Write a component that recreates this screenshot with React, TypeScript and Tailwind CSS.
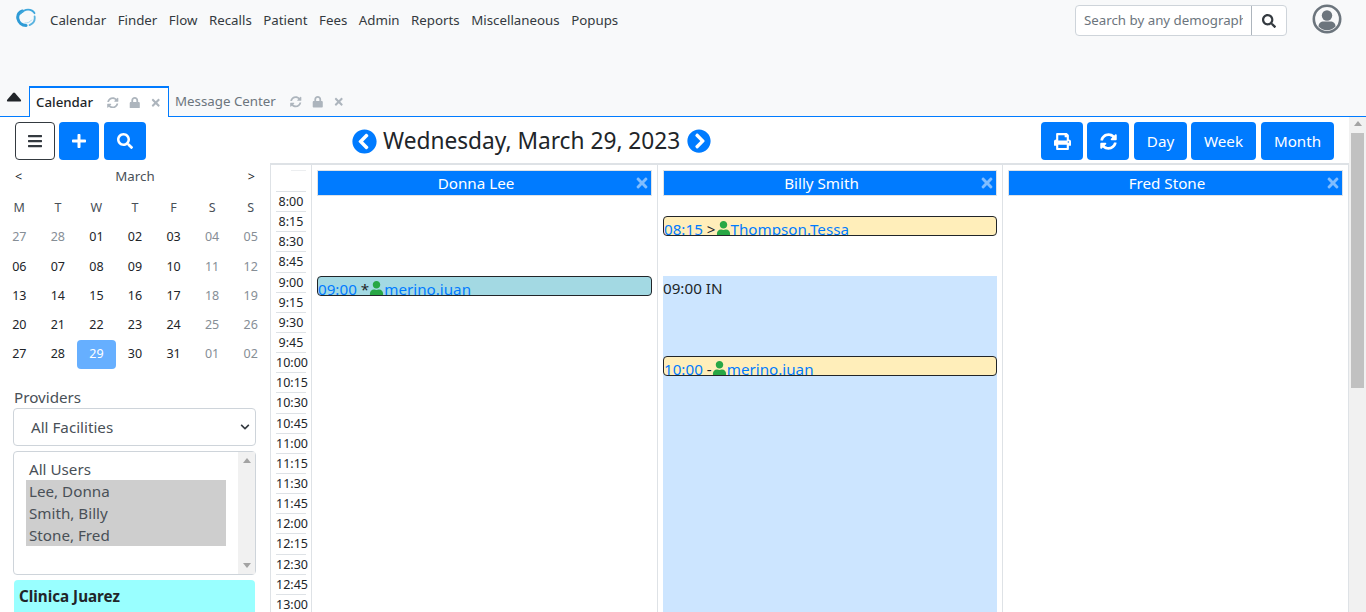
import React from 'react';
import {
  FaBars,
  FaChevronCircleLeft,
  FaChevronCircleRight,
  FaChevronDown,
  FaLock,
  FaPlus,
  FaPrint,
  FaSearch,
  FaSyncAlt,
  FaTimes,
  FaUser,
} from 'react-icons/fa';

const menuItems = ['Calendar', 'Finder', 'Flow', 'Recalls', 'Patient', 'Fees', 'Admin', 'Reports', 'Miscellaneous', 'Popups'];
const times = [
  '8:00', '8:15', '8:30', '8:45', '9:00', '9:15', '9:30', '9:45', '10:00', '10:15', '10:30',
  '10:45', '11:00', '11:15', '11:30', '11:45', '12:00', '12:15', '12:30', '12:45', '13:00',
];
const weekDays = ['M', 'T', 'W', 'T', 'F', 'S', 'S'];
const monthDays = [
  ['27', '28', '01', '02', '03', '04', '05'],
  ['06', '07', '08', '09', '10', '11', '12'],
  ['13', '14', '15', '16', '17', '18', '19'],
  ['20', '21', '22', '23', '24', '25', '26'],
  ['27', '28', '29', '30', '31', '01', '02'],
];

function isMuted(row: number, col: number) {
  if (row === 0 && col < 2) return true;
  return col > 4;
}

function TabIcons() {
  return (
    <span className="flex items-center text-[11.5px] text-[#adb5bd]">
      <FaSyncAlt />
      <FaLock className="ml-[10px]" />
      <FaTimes className="ml-[10px]" />
    </span>
  );
}

function Logo() {
  return (
    <svg viewBox="0 0 20 20" className="h-[20px] w-[20px]">
      <path d="M6.5 3C3 4.4 1.2 7.4 1.9 10.8c.8 3.8 4 6.6 8.2 6.7" fill="none" stroke="#2e9bd6" strokeWidth="3" strokeLinecap="round" />
      <path d="M4.5 5.5C7 1.6 12.5 0.6 16 2.6c1.2.7 2 1.6 2.5 2.6" fill="none" stroke="#3fa7dc" strokeWidth="1.8" strokeLinecap="round" />
      <path d="M18.6 8.5c.6 3.6-1.4 7-5 8.6" fill="none" stroke="#5bb4e0" strokeWidth="1.8" strokeLinecap="round" />
      <path d="M9 15c2.6.2 5-.9 6.6-3" fill="none" stroke="#a9d8f0" strokeWidth="1" strokeLinecap="round" />
    </svg>
  );
}

function ProfileIcon() {
  return (
    <svg viewBox="0 0 30 30" className="h-[30px] w-[30px]">
      <circle cx="15" cy="15" r="13.2" fill="none" stroke="#6c757d" strokeWidth="2.6" />
      <circle cx="15" cy="11.5" r="5.2" fill="#6c757d" />
      <path d="M6.5 22.5c0-3.4 2.4-5 5-5h7c2.6 0 5 1.6 5 5-2.2 2.3-5.2 3.7-8.5 3.7s-6.300-1.400-8.500-3.700z" fill="#6c757d" />
    </svg>
  );
}

function Navbar() {
  return (
    <div className="flex h-[86px] items-start bg-[#f8f9fa]">
      <div className="ml-[16px] mt-[8px]">
        <Logo />
      </div>
      <div className="ml-[14px] mt-[10px] flex gap-[11.5px] text-[13.3px] leading-[21px] text-[#343a40]">
        {menuItems.map((item) => (
          <span key={item}>{item}</span>
        ))}
      </div>
      <div className="ml-auto mt-[5px] flex h-[31px] w-[212px] rounded-[4px] border border-[#ced4da] bg-white text-[13.3px] text-[#6c757d]">
        <div className="flex-1 whitespace-nowrap pl-[8px] leading-[29px]">
          <div className="w-[159px] overflow-hidden">Search by any demographics</div>
        </div>
        <div className="flex w-[35px] items-center justify-center border-l border-[#adb5bd] text-[14px] text-[#343a40]">
          <FaSearch />
        </div>
      </div>
      <div className="ml-[25px] mr-[24px] mt-[4px]">
        <ProfileIcon />
      </div>
    </div>
  );
}

function TabBar() {
  return (
    <div className="flex h-[31px] items-end border-b border-[#007bff] bg-[#f8f9fa]">
      <svg viewBox="0 0 16 10" className="mb-[14px] ml-[6px] mr-[7px] h-[10px] w-[16px] fill-[#212529]">
        <path d="M7 1 L1 8 Q0.4 9.5 2 9.5 L14 9.5 Q15.6 9.5 15 8 L9 1 Q8 0 7 1 Z" />
      </svg>
      <div className="-mb-px flex h-[31px] w-[140px] items-center border-x border-t-2 border-[#007bff] border-b-white bg-white pl-[6px] text-[13.3px] font-medium text-[#212529]">
        <span className="w-[71px]">Calendar</span>
        <TabIcons />
      </div>
      <div className="flex h-[30px] items-center pl-[6px] pt-[2px] text-[13.3px] text-[#6c757d]">
        <span className="w-[115px] whitespace-nowrap">Message Center</span>
        <TabIcons />
      </div>
    </div>
  );
}

function MiniCalendar() {
  return (
    <div className="text-[12.5px] text-[#212529]">
      <div className="flex h-[20px] items-center justify-between pl-[15px] pr-[15px]">
        <span>&lt;</span>
        <span className="text-[13.3px] text-[#495057]">March</span>
        <span>&gt;</span>
      </div>
      <div className="mt-[7px] grid grid-cols-7">
        {weekDays.map((day, i) => (
          <div key={i} className="flex h-[29.2px] items-center justify-center text-[#495057]">
            {day}
          </div>
        ))}
        {monthDays.map((row, r) =>
          row.map((day, c) => {
            const selected = r === 4 && c === 2;
            return (
              <div
                key={`${r}-${c}`}
                className={`flex h-[29.2px] items-center justify-center ${
                  selected ? 'rounded-[4px] bg-[#66afff] text-white' : isMuted(r, c) ? 'text-[#868e96]' : 'text-[#212529]'
                }`}
              >
                {day}
              </div>
            );
          })
        )}
      </div>
    </div>
  );
}

function Sidebar() {
  return (
    <div className="h-[495px] w-[270px] shrink-0 overflow-hidden">
      <div className="flex gap-[4px] pl-[15px] pt-[5px]">
        <div className="flex h-[38px] w-[40px] items-center justify-center rounded-[4px] border border-[#343a40] text-[16px] text-[#343a40]">
          <FaBars />
        </div>
        <div className="flex h-[38px] w-[40px] items-center justify-center rounded-[4px] bg-[#007bff] text-[16px] text-white">
          <FaPlus />
        </div>
        <div className="ml-[1px] flex h-[38px] w-[42px] items-center justify-center rounded-[4px] bg-[#007bff] text-[16px] text-white">
          <FaSearch />
        </div>
      </div>
      <div className="mt-[7px]">
        <MiniCalendar />
      </div>
      <div className="ml-[14px] mt-[16px] text-[15.2px] leading-[24px] text-[#495057]">Providers</div>
      <div className="ml-[13px] mt-[-1px] flex h-[38px] w-[243px] items-center justify-between rounded-[4px] border border-[#ced4da] pl-[17px] pr-[5px] text-[15.2px] text-[#495057]">
        <span>All Facilities</span>
        <FaChevronDown className="text-[10px] text-[#343a40]" />
      </div>
      <div className="ml-[13px] mt-[5px] flex h-[124px] w-[243px] rounded-[4px] border border-[#ced4da] text-[15.2px] leading-[22px] text-[#495057]">
        <div className="flex-1 pl-[12px] pt-[6px]">
          <div className="pl-[3px]">All Users</div>
          <div className="w-[200px] bg-[#cecece] pl-[3px]">Lee, Donna</div>
          <div className="w-[200px] bg-[#cecece] pl-[3px]">Smith, Billy</div>
          <div className="w-[200px] bg-[#cecece] pl-[3px]">Stone, Fred</div>
        </div>
        <div className="flex w-[17px] flex-col items-center justify-between bg-[#f1f1f1] py-[6px]">
          <div className="h-0 w-0 border-x-[4px] border-b-[5px] border-x-transparent border-b-[#a3a3a3]" />
          <div className="h-0 w-0 border-x-[4px] border-t-[5px] border-x-transparent border-t-[#a3a3a3]" />
        </div>
      </div>
      <div className="ml-[14px] mt-[5px] h-[40px] w-[241px] rounded-[4px] bg-[#99ffff] pl-[5px] pt-[4px] text-[15.2px] font-bold leading-[24px] text-[#212529]">
        Clinica Juarez
      </div>
    </div>
  );
}

function Toolbar() {
  const buttonClass = 'flex h-[38px] items-center justify-center rounded-[4px] bg-[#007bff] text-white';
  return (
    <div className="flex h-[46px] items-start pt-[5px]">
      <div className="ml-[82px] flex h-[38px] items-center">
        <FaChevronCircleLeft className="text-[25px] text-[#007bff]" />
        <span className="ml-[6px] w-[304px] whitespace-nowrap text-[22.7px] text-[#212529]">Wednesday, March 29, 2023</span>
        <FaChevronCircleRight className="text-[24px] text-[#007bff]" />
      </div>
      <div className="ml-auto mr-[15px] flex gap-[4px] text-[15.2px]">
        <div className={`${buttonClass} w-[42px] text-[17px]`}>
          <FaPrint />
        </div>
        <div className={`${buttonClass} w-[42px] text-[17px]`}>
          <FaSyncAlt />
        </div>
        <div className={`${buttonClass} ml-[1px] w-[53px]`}>Day</div>
        <div className={`${buttonClass} w-[65px]`}>Week</div>
        <div className={`${buttonClass} ml-[1px] w-[73px]`}>Month</div>
      </div>
    </div>
  );
}

function ProviderHeader({ name }: { name: string }) {
  return (
    <div className="flex h-[26px] items-center border border-[#dee2e6] bg-[#007bff] text-[15.2px] text-white">
      <span className="flex-1 text-center">{name}</span>
      <FaTimes className="mr-[1px] text-[16px] text-[#80bdff]" />
    </div>
  );
}

function Appointment({ time, flag, patient, color }: { time: string; flag: string; patient: string; color: string }) {
  return (
    <div className={`flex h-[20px] overflow-hidden whitespace-nowrap rounded-[4px] border border-[#212529] text-[15.2px] leading-[25px] ${color}`}>
      <span className="text-[#007bff] underline">{time}</span>
      <span className="ml-[4px] text-[#212529]">{flag}</span>
      <FaUser className="mt-[4px] shrink-0 text-[15px] text-[#28a745]" />
      <span className="text-[#007bff] underline">{patient}</span>
    </div>
  );
}

function Schedule() {
  return (
    <div className="flex h-[449px] overflow-hidden border-t-2 border-[#dee2e6]">
      <div className="w-[42px] shrink-0 border-x border-[#dee2e6] px-[5px] pt-[5px]">
        <div className="ml-[15px] h-[1px] bg-[#eceef0]" />
        <div className="h-[20px]" />
        {times.map((t) => (
          <div key={t} className="h-[20.15px] border-t border-[#dee2e6] text-center text-[12.5px] leading-[20px] text-[#212529]">
            {t}
          </div>
        ))}
      </div>
      <div className="w-[346px] shrink-0 border-r border-[#dee2e6] px-[5px] pt-[5px]">
        <ProviderHeader name="Donna Lee" />
        <div className="mt-[80px]">
          <Appointment time="09:00" flag="*" patient="merino.juan" color="bg-[#a3d9e3]" />
        </div>
      </div>
      <div className="w-[345px] shrink-0 border-r border-[#dee2e6] px-[5px] pt-[5px]">
        <ProviderHeader name="Billy Smith" />
        <div className="mt-[20px]">
          <Appointment time="08:15" flag=">" patient="Thompson.Tessa" color="bg-[#ffeeba]" />
        </div>
        <div className="mt-[40px] h-[400px] bg-[#cce5ff] text-[15.2px] leading-[24px] text-[#212529]">
          09:00 IN
          <div className="mt-[56px]">
            <Appointment time="10:00" flag="-" patient="merino.juan" color="bg-[#ffeeba]" />
          </div>
        </div>
      </div>
      <div className="flex-1 border-r border-[#dee2e6] px-[5px] pt-[5px]">
        <ProviderHeader name="Fred Stone" />
      </div>
    </div>
  );
}

function PageScrollbar() {
  return (
    <div className="flex w-[17px] shrink-0 flex-col items-center bg-[#f1f1f1]">
      <div className="mb-[3px] mt-[4px] h-0 w-0 border-x-[4px] border-b-[5px] border-x-transparent border-b-[#a3a3a3]" />
      <div className="mt-[4px] h-[255px] w-[13px] bg-[#c1c1c1]" />
    </div>
  );
}

export default function App() {
  return (
    <div
      className="h-[612px] w-[1366px] overflow-hidden bg-white"
      style={{ fontFamily: '"Noto Sans", "Open Sans", sans-serif' }}
    >
      <Navbar />
      <TabBar />
      <div className="flex h-[495px]">
        <Sidebar />
        <div className="min-w-0 flex-1">
          <Toolbar />
          <Schedule />
        </div>
        <PageScrollbar />
      </div>
    </div>
  );
}
